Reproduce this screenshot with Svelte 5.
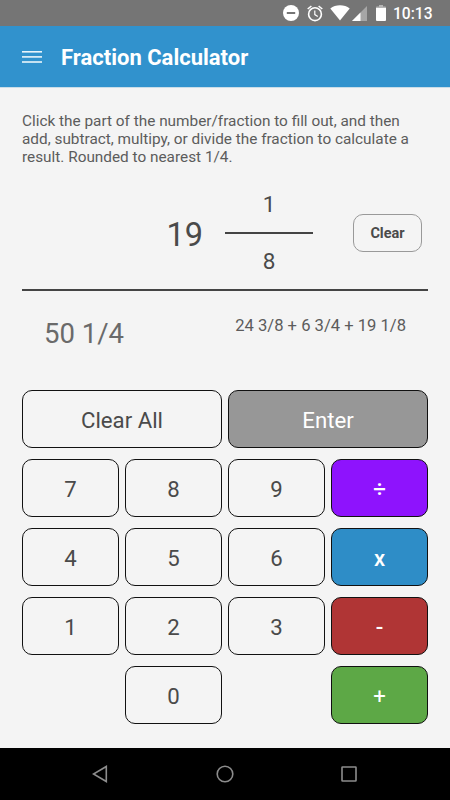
<script lang="ts">
  let whole = '19';
  let numerator = '1';
  let denominator = '8';
  let result = '50 1/4';
  let history = '24 3/8 + 6 3/4 + 19 1/8';
  let active = 'whole';

  const keys = [
    { label: '7', type: 'digit' },
    { label: '8', type: 'digit' },
    { label: '9', type: 'digit' },
    { label: '÷', type: 'divide' },
    { label: '4', type: 'digit' },
    { label: '5', type: 'digit' },
    { label: '6', type: 'digit' },
    { label: 'x', type: 'multiply' },
    { label: '1', type: 'digit' },
    { label: '2', type: 'digit' },
    { label: '3', type: 'digit' },
    { label: '-', type: 'subtract' },
    { label: '0', type: 'digit zero' },
    { label: '+', type: 'add' },
  ];

  function press(label: string): void {
    if (!/\d/.test(label)) {
      return;
    }
    if (active === 'whole') whole += label;
    if (active === 'numerator') numerator += label;
    if (active === 'denominator') denominator += label;
  }

  function clear(): void {
    whole = '';
    numerator = '';
    denominator = '';
  }

  function clearAll(): void {
    clear();
    result = '';
    history = '';
  }
</script>

<div class="screen">
  <div class="status">
    <svg class="dnd" width="16" height="16" viewBox="0 0 16 16">
      <circle cx="8" cy="8" r="8" fill="#fff" />
      <rect x="3.8" y="7" width="8.4" height="2" fill="#757575" />
    </svg>
    <svg class="alarm" width="16" height="17" viewBox="0 0 16 17" fill="none" stroke="#fff">
      <circle cx="8" cy="9.2" r="6.4" stroke-width="1.6" />
      <path d="M7.8 5.4v4.2l3 1.8" stroke-width="1.2" />
      <path d="M.7 4 4.4 1M15.3 4 11.6 1" stroke-width="1.6" />
    </svg>
    <svg class="wifi" width="20" height="16" viewBox="0 0 20 16">
      <path d="M10 15.6.3 3.5C3 1.4 6.3.3 10 .3s7 1.1 9.7 3.2z" fill="#fff" />
    </svg>
    <svg class="signal" width="15" height="15" viewBox="0 0 15 15">
      <path d="M15 0v15H0z" fill="#a6a6a6" />
      <path d="M8.5 6.5V15H0z" fill="#fff" />
    </svg>
    <svg class="battery" width="10" height="16" viewBox="0 0 10 16">
      <path d="M3 0h4v1.500h2q1 0 1 1V3H0v-.5q0-1 1-1h2z" fill="#b5b5b5" />
      <path d="M0 3h10v12q0 1-1 1H1q-1 0-1-1z" fill="#fff" />
    </svg>
    <span>10:13</span>
  </div>

  <header>
    <svg width="20" height="13" viewBox="0 0 20 13" fill="#e9f4fa">
      <rect y="0" width="20" height="1.6" />
      <rect y="5.1" width="20" height="1.6" />
      <rect y="10.2" width="20" height="1.6" />
    </svg>
    <h1>Fraction Calculator</h1>
  </header>

  <main>
    <p>
      Click the part of the number/fraction to fill out, and then<br />
      add, subtract, multipy, or divide the fraction to calculate a<br />
      result. Rounded to nearest 1/4.
    </p>

    <div class="entry">
      <button class="whole" on:click={() => (active = 'whole')}>{whole}</button>
      <div class="fraction">
        <button on:click={() => (active = 'numerator')}>{numerator}</button>
        <div class="bar"></div>
        <button on:click={() => (active = 'denominator')}>{denominator}</button>
      </div>
      <button class="clear" on:click={clear}>Clear</button>
    </div>

    <div class="output">
      <div class="result">{result}</div>
      <div class="history">{history}</div>
    </div>

    <div class="keypad">
      <button class="key wide" on:click={clearAll}>Clear All</button>
      <button class="key wide enter">Enter</button>
      {#each keys as key}
        <button class="key {key.type}" on:click={() => press(key.label)}>{key.label}</button>
      {/each}
    </div>
  </main>

  <nav>
    <svg width="16" height="18" viewBox="0 0 16 18"><path d="M14.3 1.5v15L1.5 9z" /></svg>
    <svg width="18" height="18" viewBox="0 0 18 18"><circle cx="9" cy="9" r="7.8" /></svg>
    <svg width="16" height="16" viewBox="0 0 16 16"><rect x="1" y="1" width="14" height="14" rx=".5" /></svg>
  </nav>
</div>

<style>
  :global(body) {
    margin: 0;
  }
  .screen {
    width: 450px;
    height: 800px;
    display: flex;
    flex-direction: column;
    overflow: hidden;
    background-color: #f4f4f4;
    color: #4a4a4a;
    font-family: Roboto, sans-serif;
  }
  button {
    padding: 0;
    border: 0;
    background: none;
    color: inherit;
    font: inherit;
    cursor: pointer;
  }
  svg {
    flex: none;
  }
  .status {
    height: 26px;
    box-sizing: border-box;
    flex: none;
    display: flex;
    align-items: center;
    justify-content: flex-end;
    padding-right: 18px;
    background-color: #757575;
    color: #fff;
    font-size: 15.6px;
    font-weight: 500;
    line-height: 26px;
  }
  .status span {
    width: 39px;
    padding-top: 2px;
    white-space: nowrap;
  }
  .alarm {
    margin-left: 8px;
  }
  .wifi {
    margin-left: 7px;
  }
  .signal {
    margin-left: 2px;
    margin-top: 1px;
  }
  .battery {
    margin-left: 9px;
    margin-right: 7px;
  }
  header {
    height: 62px;
    box-sizing: border-box;
    flex: none;
    display: flex;
    align-items: center;
    padding: 2px 0 0 22px;
    background-color: #3192cd;
    border-bottom: 1px solid #c9dde8;
  }
  h1 {
    margin: 1px 0 0 19px;
    color: #fff;
    font-size: 22px;
    font-weight: 700;
    line-height: 28px;
  }
  main {
    flex: 1;
    padding: 24px 22px 0;
  }
  p {
    margin: 0;
    font-size: 15.35px;
    line-height: 18px;
    color: #5c5c5c;
    white-space: nowrap;
  }
  .entry {
    height: 125px;
    box-sizing: border-box;
    display: flex;
    align-items: center;
    justify-content: flex-end;
    padding: 11px 6px 0 0;
    border-bottom: 2px solid #444;
  }
  .whole {
    margin: 4px 22px 0 0;
    font-size: 32.5px;
    line-height: 40px;
  }
  .fraction {
    width: 88px;
    display: flex;
    flex-direction: column;
    gap: 14px;
    margin-bottom: 2px;
  }
  .fraction button {
    height: 28px;
    font-size: 22.5px;
    line-height: 28px;
  }
  .fraction .bar + button {
    margin-top: -1px;
  }
  .bar {
    height: 2px;
    background-color: #444;
  }
  .clear {
    width: 69px;
    height: 38px;
    margin-left: 40px;
    padding-top: 1px;
    border: 1px solid #999;
    border-radius: 10px;
    font-size: 14.5px;
    font-weight: 700;
  }
  .output {
    height: 99px;
    display: flex;
    align-items: flex-start;
    justify-content: space-between;
  }
  .result {
    padding: 26px 0 0 22px;
    font-size: 27.5px;
    line-height: 34px;
    color: #6a6a6a;
  }
  .history {
    padding: 25px 22px 0 0;
    font-size: 16.6px;
    line-height: 20px;
    color: #5c5c5c;
  }
  .keypad {
    display: grid;
    grid-template-columns: repeat(4, 97px);
    grid-auto-rows: 58px;
    gap: 11px 6px;
  }
  .key {
    padding-top: 1px;
    border: 1px solid #111;
    border-radius: 10px;
    font-size: 22.2px;
  }
  .wide {
    grid-column: span 2;
  }
  .enter {
    background-color: #979797;
    color: #fff;
  }
  .zero {
    grid-column: 2;
  }
  .divide,
  .multiply,
  .subtract,
  .add {
    grid-column: 4;
    color: #fff;
    font-weight: 500;
  }
  .divide {
    background-color: #8e13fd;
  }
  .multiply {
    background-color: #2e8dc7;
  }
  .subtract {
    background-color: #b03535;
  }
  .add {
    background-color: #5da846;
    font-weight: 400;
  }
  nav {
    height: 52px;
    flex: none;
    display: flex;
    align-items: center;
    justify-content: space-between;
    box-sizing: border-box;
    padding: 0 93px 0 92px;
    background-color: #000;
  }
  nav svg {
    fill: none;
    stroke: #8c8c8c;
    stroke-width: 1.6;
  }
</style>
